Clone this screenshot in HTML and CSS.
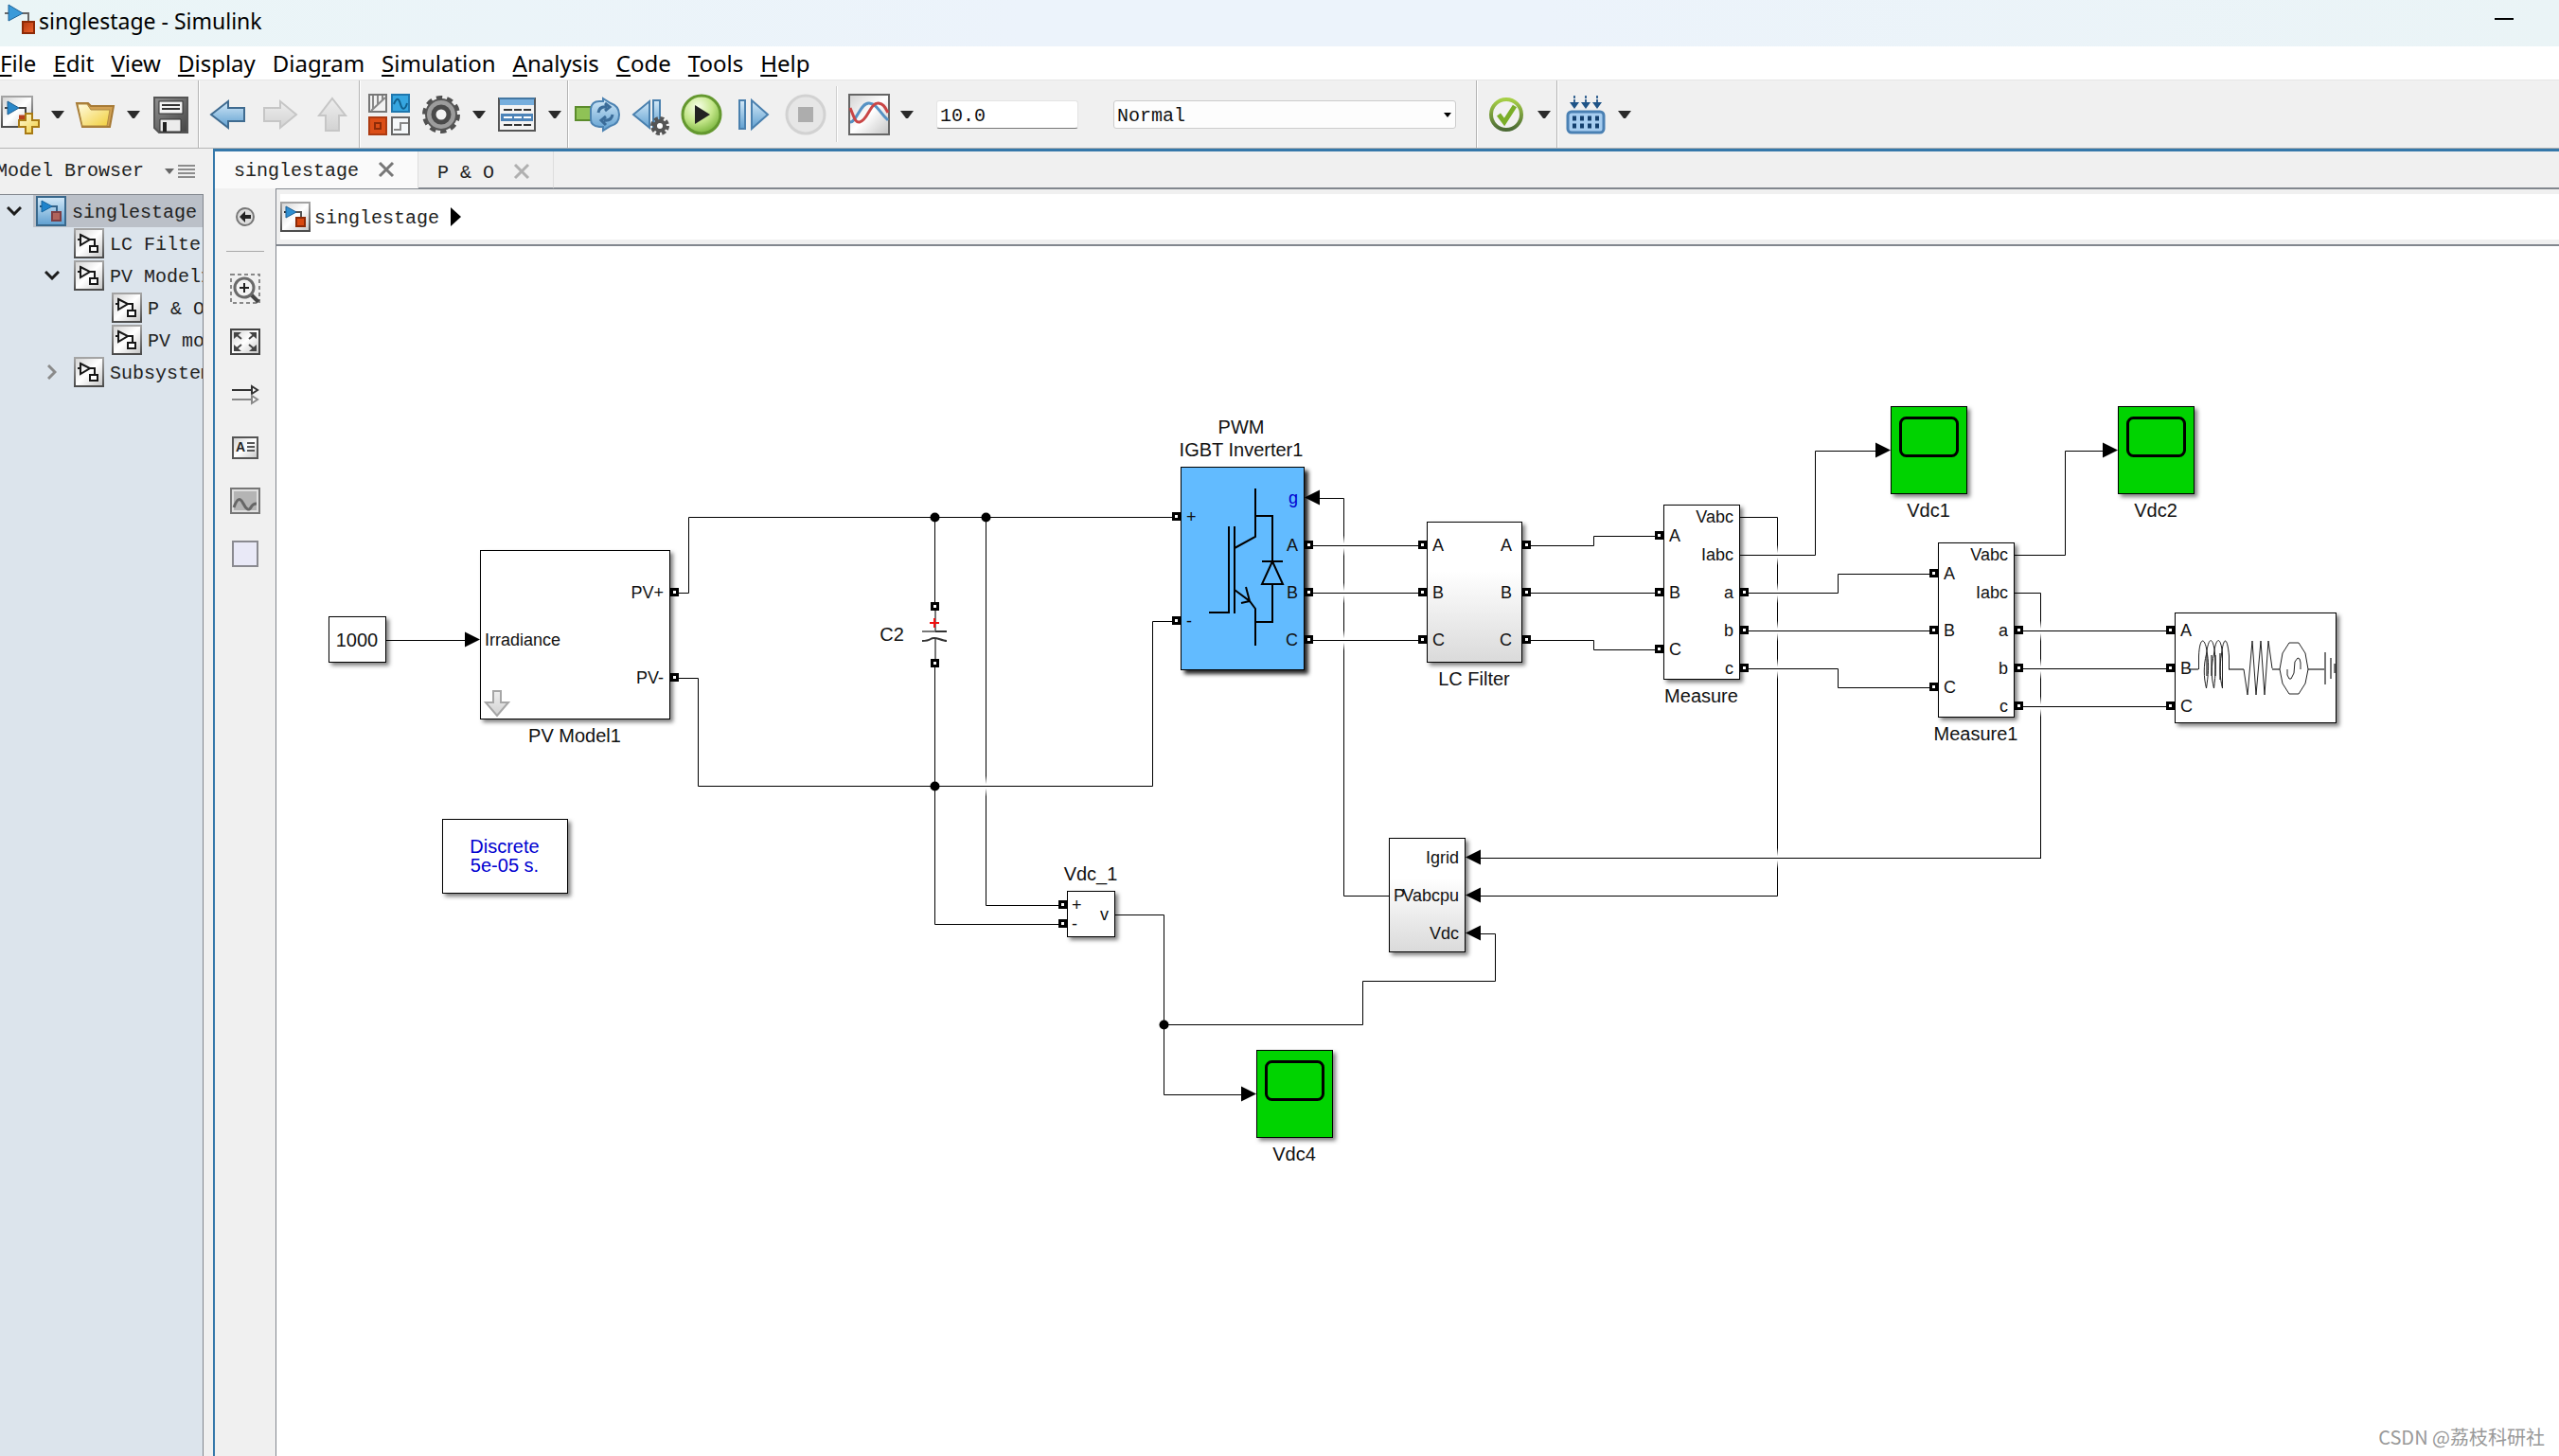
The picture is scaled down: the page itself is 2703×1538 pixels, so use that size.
FILE: index.html
```html
<!DOCTYPE html>
<html lang="en">
<head>
<meta charset="utf-8">
<title>singlestage - Simulink</title>
<link rel="stylesheet" href="styles.css">
</head>
<body>
<svg class="defs" aria-hidden="true">
  <defs>
    <linearGradient id="steel" x1="0" y1="0" x2="1" y2="1"><stop offset="0" stop-color="#d2d2d2"/><stop offset=".5" stop-color="#fff"/><stop offset="1" stop-color="#c4c4c4"/></linearGradient>
    <linearGradient id="frame" x1="0" y1="0" x2="0" y2="1"><stop offset="0" stop-color="#a4a4a4"/><stop offset="1" stop-color="#4c4c4c"/></linearGradient>
    <linearGradient id="sky" x1="0" y1="0" x2="0" y2="1"><stop offset="0" stop-color="#d3e9f8"/><stop offset="1" stop-color="#5f9fd0"/></linearGradient>
    <linearGradient id="mute" x1="0" y1="0" x2="0" y2="1"><stop offset="0" stop-color="#eee"/><stop offset="1" stop-color="#d2d2d2"/></linearGradient>
    <linearGradient id="gold" x1="0" y1="0" x2="1" y2="1"><stop offset="0" stop-color="#fffbe0"/><stop offset="1" stop-color="#f2cf3c"/></linearGradient>
    <linearGradient id="brick" x1="0" y1="0" x2="1" y2="1"><stop offset="0" stop-color="#b0380f"/><stop offset="1" stop-color="#f0642c"/></linearGradient>
    <linearGradient id="dark" x1="0" y1="0" x2="1" y2="1"><stop offset="0" stop-color="#909090"/><stop offset="1" stop-color="#444"/></linearGradient>
    <radialGradient id="lime" cx=".4" cy=".3" r=".8"><stop offset="0" stop-color="#f8ffe8"/><stop offset=".5" stop-color="#c3e689"/><stop offset="1" stop-color="#68a92a"/></radialGradient>
    <linearGradient id="moss" x1="0" y1="0" x2="0" y2="1"><stop offset="0" stop-color="#a6cf45"/><stop offset="1" stop-color="#4b6a35"/></linearGradient>
    <linearGradient id="subsys" x1="0" y1="0" x2="0" y2="1"><stop offset=".35" stop-color="#fff"/><stop offset="1" stop-color="#dadada"/></linearGradient>
    <linearGradient id="fade" x1="0" y1="0" x2="0" y2="1"><stop offset="0" stop-color="#fff" stop-opacity="0"/><stop offset=".4" stop-color="#fff"/><stop offset=".6" stop-color="#fff"/><stop offset="1" stop-color="#fff" stop-opacity="0"/></linearGradient>

    <symbol id="i-model" viewBox="0 0 32 32">
      <rect x="1" y="1" width="30" height="30" fill="url(#steel)" stroke="url(#frame)" stroke-width="2"/>
      <path d="M16 11h6v6" fill="none" stroke="#555" stroke-width="2"/>
      <path d="M4 11h2" stroke="#333" stroke-width="2"/>
      <path d="M6 5l11 6-11 6z" fill="#2f8fd0" stroke="#1b5f95"/>
      <rect x="17" y="17" width="9" height="9" fill="#d9480f" stroke="#8d2a06" stroke-width="2"/>
    </symbol>
    <symbol id="i-model-selected" viewBox="0 0 32 32">
      <rect x="1" y="1" width="30" height="30" fill="url(#sky)" stroke="#39688c" stroke-width="2"/>
      <path d="M16 11h6v6" fill="none" stroke="#34648c" stroke-width="2"/>
      <path d="M4 11h2" stroke="#1c4f78" stroke-width="2"/>
      <path d="M6 5l11 6-11 6z" fill="#1e83cc" stroke="#14639c"/>
      <rect x="17" y="17" width="9" height="9" fill="#b0645c" stroke="#7d3f45" stroke-width="2"/>
    </symbol>
    <symbol id="i-subsystem" viewBox="0 0 32 32">
      <rect x="1" y="1" width="30" height="30" fill="url(#steel)" stroke="url(#frame)" stroke-width="2"/>
      <path d="M4 12h3M7 7l10 5-10 6zM17 12h5v7" fill="none" stroke="#161616" stroke-width="2"/>
      <rect x="17" y="19" width="8" height="6" fill="#fff" stroke="#161616" stroke-width="2"/>
    </symbol>
    <symbol id="i-down" viewBox="0 0 14 8"><path d="M0 0h14L8 8H6z" fill="#2a2a2a"/></symbol>
    <symbol id="i-chevron-down" viewBox="0 0 16 10"><path d="M1 1l7 7 7-7" fill="none" stroke="#1c1c1c" stroke-width="3"/></symbol>
    <symbol id="i-chevron-right" viewBox="0 0 10 16"><path d="M1 1l7 7-7 7" fill="none" stroke="#8a8a8a" stroke-width="3"/></symbol>
    <symbol id="i-close" viewBox="0 0 18 18"><path d="M2 2l14 14M16 2L2 16" stroke="currentColor" stroke-width="3"/></symbol>
  </defs>
</svg>

<header class="titlebar">
  <svg class="app-logo" viewBox="0 0 34 34" aria-hidden="true">
    <path d="M0 10h4M18 10h7v9" fill="none" stroke="#666" stroke-width="2"/>
    <path d="M4 1l15 9-15 8z" fill="#3a9ad9" stroke="#1d6398"/>
    <rect x="19" y="19" width="12" height="12" fill="url(#brick)" stroke="#8d2a06" stroke-width="2"/>
  </svg>
  <h1>singlestage - Simulink</h1>
  <button class="minimize" aria-label="Minimize"></button>
</header>

<nav class="menubar" aria-label="Main menu">
  <button><u>F</u>ile</button><button><u>E</u>dit</button><button><u>V</u>iew</button><button><u>D</u>isplay</button><button>Diag<u>r</u>am</button><button><u>S</u>imulation</button><button><u>A</u>nalysis</button><button><u>C</u>ode</button><button><u>T</u>ools</button><button><u>H</u>elp</button>
</nav>

<div class="toolbar" role="toolbar">
  <div class="group first">
    <button class="tool" aria-label="New model"><svg viewBox="0 0 44 44"><rect x="3" y="3" width="32" height="32" fill="url(#steel)" stroke="url(#frame)" stroke-width="2"/><path d="M6 15h4M21 15h7v7M21 24h8" fill="none" stroke="#444" stroke-width="2"/><path d="M21 25h9" stroke="#b8401c" stroke-width="5"/><path d="M9 8l12 7-12 7z" fill="#2a88c9" stroke="#1b5c90"/><path d="M28 21h7v7h7v7h-7v7h-7v-7h-7v-7h7z" fill="url(#gold)" stroke="#a87a14" stroke-width="2"/></svg></button>
    <button class="more" aria-label="New options"><svg><use href="#i-down"/></svg></button>
    <button class="tool" aria-label="Open"><svg viewBox="0 0 44 44"><path d="M2 10h12l3 3h24l-4 22H8z" fill="#d2a153" stroke="#a77a35" stroke-width="2"/><path d="M3 11h10l4 6h20l-3 17H8z" fill="url(#gold)" stroke="#b08a43"/></svg></button>
    <button class="more" aria-label="Open options"><svg><use href="#i-down"/></svg></button>
    <button class="tool" aria-label="Save"><svg viewBox="0 0 44 44"><path d="M4 4h35v37H9l-5-5z" fill="url(#dark)" stroke="#555" stroke-width="2"/><rect x="9" y="8" width="25" height="13" fill="#f3f3f3" stroke="#333"/><path d="M12 12h19M12 16h19" stroke="#333" stroke-width="2"/><path d="M10 27h22v13H10z" fill="#ececec" stroke="#333"/><path d="M15 30v10" stroke="#222" stroke-width="4"/></svg></button>
  </div>
  <span class="divider"></span>
  <div class="group">
    <button class="tool" aria-label="Back"><svg viewBox="0 0 44 44"><path d="M4 22L22 8v7h17v14H22v7z" fill="url(#sky)" stroke="#3f6b90" stroke-width="2"/></svg></button>
    <button class="tool" aria-label="Forward" disabled><svg viewBox="0 0 44 44"><path d="M39 22L22 8v7H5v14h17v7z" fill="url(#mute)" stroke="#c6c6c6" stroke-width="2"/></svg></button>
    <button class="tool" aria-label="Up to parent" disabled><svg viewBox="0 0 44 44"><path d="M22 5l14 18h-7v16H15V23H8z" fill="url(#mute)" stroke="#c6c6c6" stroke-width="2"/></svg></button>
  </div>
  <span class="divider"></span>
  <div class="group">
    <button class="tool" aria-label="Library browser"><svg viewBox="0 0 44 44"><rect x="1" y="1" width="18" height="18" fill="#f2f2f2" stroke="#777" stroke-width="2"/><path d="M5 2v14M10 2v10M15 2v5M3 18L18 4" stroke="#888" stroke-width="2"/><rect x="25" y="1" width="18" height="18" fill="#36a6e0" stroke="#1f77ae" stroke-width="2"/><path d="M27 11c3-7 5-7 7 0s5 6 7-1" fill="none" stroke="#10618f" stroke-width="2"/><rect x="1" y="25" width="18" height="18" fill="#dc4e17" stroke="#ad3b12" stroke-width="2"/><rect x="7" y="31" width="6" height="6" fill="none" stroke="#8d2b08" stroke-width="2"/><rect x="25" y="25" width="18" height="18" fill="#f5f8fa" stroke="#666" stroke-width="2"/><path d="M27 38h7v-7h8" fill="none" stroke="#888" stroke-width="2"/></svg></button>
    <button class="tool" aria-label="Model configuration"><svg viewBox="0 0 44 44"><circle cx="22" cy="22" r="17" fill="none" stroke="#505050" stroke-width="6" stroke-dasharray="6 4.68"/><circle cx="22" cy="22" r="16" fill="#9c9c9c" stroke="#555" stroke-width="2"/><circle cx="22" cy="22" r="8" fill="#f4f4f4" stroke="#4a4a4a" stroke-width="5"/></svg></button>
    <button class="more" aria-label="Configuration options"><svg><use href="#i-down"/></svg></button>
    <button class="tool" aria-label="Model explorer"><svg viewBox="0 0 44 44"><rect x="3" y="5" width="38" height="34" fill="#f3f3f3" stroke="#555" stroke-width="2"/><rect x="4" y="5" width="36" height="7" fill="#76aedd"/><path d="M3 5h38" stroke="#4477a2" stroke-width="2"/><path d="M8 17h9M19 17h8M29 17h8M8 33h9M19 33h8M29 33h8" stroke="#333" stroke-width="2"/><rect x="5" y="21" width="34" height="8" fill="#4c83b8"/><path d="M8 25h9M19 25h8M29 25h8" stroke="#fff" stroke-width="2"/></svg></button>
    <button class="more" aria-label="Explorer options"><svg><use href="#i-down"/></svg></button>
  </div>
  <span class="divider"></span>
  <div class="group">
    <button class="tool" aria-label="Fast restart"><svg class="wide" viewBox="0 0 50 44"><rect x="2" y="14" width="20" height="14" fill="#8fc256" stroke="#5c8c2c" stroke-width="2"/><path d="M18 16q1-8 9-8h4V5l8 5q9 3 9 12 0 10-9 12l-8 5v-4h-4q-9-1-9-8z" fill="url(#sky)" stroke="#4d83b2" stroke-width="2"/><path d="M26 20q1-7 9-6M33 10l5 4-5 4M41 22q-1 7-9 6M34 33l-5-5 5-4" fill="none" stroke="#3b6c99" stroke-width="3"/></svg></button>
    <button class="tool" aria-label="Step back"><svg viewBox="0 0 44 44"><path d="M5 22L22 8v28zM26 7h7v30h-7z" fill="url(#sky)" stroke="#4a80ae" stroke-width="2"/><circle cx="33" cy="34" r="8" fill="none" stroke="#555" stroke-width="4" stroke-dasharray="4 2.28"/><circle cx="33" cy="34" r="5" fill="#fff" stroke="#555" stroke-width="4"/></svg></button>
    <button class="tool" aria-label="Run"><svg viewBox="0 0 44 44"><circle cx="22" cy="22" r="20" fill="url(#lime)" stroke="#64982f" stroke-width="3"/><path d="M15 12l16 10-16 10z" fill="#222"/></svg></button>
    <button class="tool" aria-label="Step forward"><svg viewBox="0 0 44 44"><path d="M7 7h6v30H7zM20 7l17 15-17 15z" fill="url(#sky)" stroke="#4a80ae" stroke-width="2"/></svg></button>
    <button class="tool" aria-label="Stop" disabled><svg viewBox="0 0 44 44"><circle cx="22" cy="22" r="20" fill="#e6e6e6" stroke="#d2d2d2" stroke-width="3"/><path d="M14 14h16v16H14z" fill="#adadad"/></svg></button>
  </div>
  <span class="divider short"></span>
  <div class="group">
    <button class="tool" aria-label="Data inspector"><svg viewBox="0 0 44 44"><rect x="1" y="1" width="42" height="42" fill="url(#steel)" stroke="#666" stroke-width="2"/><path d="M2 30C9 30 13 9 22 10s11 10 20 18" fill="none" stroke="#5692c4" stroke-width="3"/><path d="M2 15c4 9 5 16 10 15C21 28 23 9 32 10c6 1 7 5 10 10" fill="none" stroke="#c94646" stroke-width="3"/></svg></button>
    <button class="more" aria-label="Inspector options"><svg><use href="#i-down"/></svg></button>
  </div>
  <input class="stop-time" type="text" value="10.0" aria-label="Simulation stop time">
  <div class="mode">
    <select aria-label="Simulation mode"><option>Normal</option><option>Accelerator</option></select>
    <svg class="mode-caret" viewBox="0 0 8 5" aria-hidden="true"><path d="M0 0h8L4 5z"/></svg>
  </div>
  <span class="divider spaced"></span>
  <div class="group">
    <button class="tool" aria-label="Model advisor"><svg viewBox="0 0 44 44"><circle cx="22" cy="22" r="16" fill="#f1f1f1" stroke="url(#moss)" stroke-width="4"/><path d="M14 22l6 8L31 13" fill="none" stroke="#7aae28" stroke-width="5"/></svg></button>
    <button class="more" aria-label="Advisor options"><svg><use href="#i-down"/></svg></button>
  </div>
  <span class="divider"></span>
  <div class="group">
    <button class="tool" aria-label="Build model"><svg viewBox="0 0 44 44"><path d="M9 2v8M21 2v8M33 2v8" stroke="#3a6693" stroke-width="2" stroke-dasharray="3 1"/><path d="M4 9h10l-5 7zM16 9h10l-5 7zM28 9h10l-5 7z" fill="#1f5487"/><rect x="2" y="19" width="38" height="22" rx="4" fill="#a6cdf0" stroke="#4a80b3" stroke-width="3"/><path d="M7 26h28M7 34h28" stroke="#14406e" stroke-width="5" stroke-dasharray="4 4"/></svg></button>
    <button class="more" aria-label="Build options"><svg><use href="#i-down"/></svg></button>
  </div>
</div>

<div class="workspace">
  <aside class="browser">
    <div class="browser-head">
      <h2>Model Browser</h2>
      <button aria-label="Browser options"><svg viewBox="0 0 32 16"><path d="M0 5h10l-5 6z" fill="#666"/><path d="M14 2h18M14 6h18M14 10h18M14 14h18" stroke="#8c8c8c" stroke-width="2"/></svg></button>
    </div>
    <ul class="tree">
      <li class="node">
        <button class="twisty" aria-label="Collapse"><svg class="chev-down"><use href="#i-chevron-down"/></svg></button>
        <span class="item selected"><svg><use href="#i-model-selected"/></svg><span>singlestage</span></span>
      </li>
      <li class="node level-1"><span class="twisty"></span><span class="item"><svg><use href="#i-subsystem"/></svg><span>LC Filter</span></span></li>
      <li class="node level-1">
        <button class="twisty" aria-label="Collapse"><svg class="chev-down"><use href="#i-chevron-down"/></svg></button>
        <span class="item"><svg><use href="#i-subsystem"/></svg><span>PV Model1</span></span>
      </li>
      <li class="node level-2"><span class="twisty"></span><span class="item"><svg><use href="#i-subsystem"/></svg><span>P &amp; O</span></span></li>
      <li class="node level-2"><span class="twisty"></span><span class="item"><svg><use href="#i-subsystem"/></svg><span>PV model</span></span></li>
      <li class="node level-1">
        <button class="twisty" aria-label="Expand"><svg class="chev-right"><use href="#i-chevron-right"/></svg></button>
        <span class="item"><svg><use href="#i-subsystem"/></svg><span>Subsystem</span></span>
      </li>
    </ul>
  </aside>

  <main class="editor">
    <div class="tabs">
      <div class="tab active"><span>singlestage</span><button aria-label="Close singlestage"><svg><use href="#i-close"/></svg></button></div>
      <div class="tab"><span>P &amp; O</span><button aria-label="Close P &amp; O"><svg><use href="#i-close"/></svg></button></div>
      <div class="tab-rest"></div>
    </div>
    <div class="editor-body">
      <div class="palette">
        <button class="hide" aria-label="Hide browser"><svg viewBox="0 0 32 32"><circle cx="16" cy="16" r="9" fill="#ddd" stroke="#777" stroke-width="2"/><path d="M10 16l6-6v4h6v4h-6v4z" fill="#222"/></svg></button>
        <hr>
        <button aria-label="Zoom"><svg viewBox="0 0 32 32"><path d="M1 1h30v30H1z" fill="none" stroke="#888" stroke-width="2" stroke-dasharray="4 3"/><path d="M21 21l9 9" stroke="#444" stroke-width="4"/><circle cx="15" cy="15" r="10" fill="#f4f4f4" stroke="#6a6a6a" stroke-width="3"/><path d="M10 15h10M15 10v10" stroke="#222" stroke-width="2"/></svg></button>
        <button aria-label="Fit to view"><svg viewBox="0 0 32 32"><rect x="1" y="3" width="30" height="26" fill="url(#steel)" stroke="#444" stroke-width="2"/><path d="M4 6h8l-8 7zM28 6h-8l8 7zM4 26h8l-8-7zM28 26h-8l8-7z" fill="#444"/><path d="M6 8l6 5M26 8l-6 5M6 24l6-5M26 24l-6-5" stroke="#444" stroke-width="2"/></svg></button>
        <button aria-label="Signal style"><svg viewBox="0 0 32 32"><path d="M2 11h20" stroke="#333" stroke-width="2"/><path d="M23 7v8l6-4z" fill="#fff" stroke="#333" stroke-width="2"/><path d="M2 21h20" stroke="#888" stroke-width="2"/><path d="M23 17v8l6-4z" fill="#fff" stroke="#888" stroke-width="2"/></svg></button>
        <button aria-label="Annotation"><svg viewBox="0 0 32 32"><rect x="3" y="5" width="26" height="22" fill="url(#steel)" stroke="#555" stroke-width="2"/><path d="M18 11h8M18 15h8M18 19h8" stroke="#555" stroke-width="2"/><text class="glyph" x="6" y="20">A</text></svg></button>
        <button aria-label="Image"><svg viewBox="0 0 32 32"><rect x="1" y="3" width="30" height="26" fill="#e0e0e0" stroke="#777" stroke-width="2"/><rect x="4" y="6" width="24" height="20" fill="#b4b4b4"/><path d="M4 23c4-11 7-10 10-4s6 8 8 4 4-4 6-4" fill="none" stroke="#666" stroke-width="3"/></svg></button>
        <button aria-label="Area"><svg viewBox="0 0 32 32"><rect x="3" y="3" width="26" height="26" fill="#e9e9f7" stroke="#8a8a90" stroke-width="2"/></svg></button>
      </div>
      <section class="sheet">
        <div class="breadcrumb"><div class="crumbs"><svg class="crumb-icon"><use href="#i-model"/></svg><a href="#">singlestage</a><svg class="crumb-caret" viewBox="0 0 11 20"><path d="M0 0l11 10L0 20z"/></svg></div></div>
        <div class="canvas">
          <svg class="diagram" role="img" aria-label="Single stage photovoltaic inverter model">
            <defs>
              <g id="port"><path d="M-4 -5h9v9h-9z"/><path d="M-1 -2h3v3h-3z" fill="#fff"/></g>
              <path id="in-r" d="M0 0l-16 -8v16z"/>
              <path id="in-l" d="M0 0l16 -8v16z"/>
              <rect id="gap" x="-2" y="-11" width="4" height="22" fill="url(#fade)"/>
              <g id="scope"><rect class="block" width="80" height="92" fill="#00d300"/><rect class="thick" x="10" y="12" width="60" height="40" rx="6"/></g>
            </defs>
            <g transform="translate(-292 -260)">
              <!-- vertical wires that other wires cross -->
              <path class="wire" d="M1041.500 546.500V956.500H1118M1393 526.500H1419.500V946.500H1467M1838 546.500H1877.500V946.500H1563M2128 626.500H2155.500V906.500"/>
              <use href="#gap" x="1041.500" y="830.500"/>
              <use href="#gap" x="1419.500" y="576.500"/><use href="#gap" x="1419.500" y="626.500"/><use href="#gap" x="1419.500" y="676.500"/>
              <use href="#gap" x="1877.500" y="586.500"/><use href="#gap" x="1877.500" y="626.500"/><use href="#gap" x="1877.500" y="666.500"/><use href="#gap" x="1877.500" y="706.500"/><use href="#gap" x="1877.500" y="906.500"/>
              <use href="#gap" x="2155.500" y="666.500"/><use href="#gap" x="2155.500" y="706.500"/><use href="#gap" x="2155.500" y="746.500"/>
              <!-- remaining wires -->
              <path class="wire" d="M408 676.500H492M717 626.500H727.500V546.500H1238M717 716.500H737.500V830.500H1217.500V656.500H1238M987.500 546V636M987.500 705V976.500H1118"/>
              <path class="wire" d="M1387 576.500H1498M1387 626.500H1498M1387 676.500H1498M1617 576.500H1683.500V566.500H1748M1617 626.500H1748M1617 676.500H1683.500V686.500H1748"/>
              <path class="wire" d="M1838 586.500H1917.500V476.500H1982M1847 626.500H1941.500V606.500H2038M1847 666.500H2038M1847 706.500H1941.500V726.500H2038"/>
              <path class="wire" d="M2128 586.500H2181.500V476.500H2222M2137 666.500H2288M2137 706.500H2288M2137 746.500H2288M2156 906.500H1563"/>
              <path class="wire" d="M1178 966.500H1229.500V1156.500H1312M1229.500 1082.500H1439.500V1036.500H1579.500V986.500H1563"/>
              <circle cx="987.500" cy="546.500" r="5"/><circle cx="1041.500" cy="546.500" r="5"/><circle cx="987.500" cy="830.500" r="5"/><circle cx="1229.500" cy="1082.500" r="5"/>

              <!-- constant -->
              <rect class="block" x="347.500" y="651.500" width="60" height="48"/>
              <text class="name mid" x="377" y="683">1000</text>

              <!-- PV model -->
              <rect class="block" x="507.500" y="581.500" width="200" height="178"/>
              <path d="M521 730h8v12h8l-12 14-12-14h8z" fill="url(#mute)" stroke="#a6a6a6" stroke-width="2"/>
              <text x="512" y="682">Irradiance</text>
              <text class="end" x="701" y="632">PV+</text><text class="end" x="701" y="722">PV-</text>
              <text class="name mid" x="607" y="784">PV Model1</text>
              <use href="#in-r" x="507" y="675.500"/>
              <use href="#port" x="712" y="626"/><use href="#port" x="712" y="716"/>

              <!-- powergui -->
              <rect class="block" x="467.500" y="865.500" width="132" height="78"/>
              <text class="name mid blue" x="533" y="901">Discrete</text><text class="name mid blue" x="533" y="921">5e-05 s.</text>

              <!-- capacitor -->
              <g fill="none" stroke="#777" stroke-width="2"><path d="M988 645v22M988 675v21M974 667h14"/><path stroke="#333" d="M988 667h12M974 677q6 0 9-2t9 0 8 2"/><path stroke="#f01010" d="M982 658h10M987 653v10"/></g>
              <use href="#port" x="987" y="641"/><use href="#port" x="987" y="701"/>
              <text class="name mid" x="942" y="677">C2</text>

              <!-- inverter -->
              <text class="name mid" x="1311" y="458">PWM</text><text class="name mid" x="1311" y="482">IGBT Inverter1</text>
              <rect class="block raised" x="1247.500" y="493.500" width="130" height="214" fill="#62bbff"/>
              <path class="symbol" d="M1326 516v51l-22 12M1298 556v91h-21M1304 556v92M1304 623l16 12 6 8v39M1316 620l4 15-9 2M1326 545h18v48M1344 617v40h-18M1333 593h22M1344 593l-11 24h22z"/>
              <text x="1253" y="552">+</text><text x="1253" y="662">-</text>
              <text class="end blue" x="1371" y="532">g</text><text class="end" x="1371" y="582">A</text><text class="end" x="1371" y="632">B</text><text class="end" x="1371" y="682">C</text>
              <use href="#in-l" x="1378" y="525.500"/>
              <use href="#port" x="1242" y="546"/><use href="#port" x="1242" y="656"/>
              <use href="#port" x="1382" y="576"/><use href="#port" x="1382" y="626"/><use href="#port" x="1382" y="676"/>

              <!-- LC filter -->
              <rect class="block" x="1507.500" y="551.500" width="100" height="148" fill="url(#subsys)"/>
              <text x="1513" y="582">A</text><text x="1513" y="632">B</text><text x="1513" y="682">C</text>
              <text class="end" x="1597" y="582">A</text><text class="end" x="1597" y="632">B</text><text class="end" x="1597" y="682">C</text>
              <text class="name mid" x="1557" y="724">LC Filter</text>
              <use href="#port" x="1502" y="576"/><use href="#port" x="1502" y="626"/><use href="#port" x="1502" y="676"/>
              <use href="#port" x="1612" y="576"/><use href="#port" x="1612" y="626"/><use href="#port" x="1612" y="676"/>

              <!-- measurement blocks -->
              <rect class="block" x="1757.500" y="533.500" width="80" height="184"/>
              <text x="1763" y="572">A</text><text x="1763" y="632">B</text><text x="1763" y="692">C</text>
              <text class="end" x="1831" y="552">Vabc</text><text class="end" x="1831" y="592">Iabc</text><text class="end" x="1831" y="632">a</text><text class="end" x="1831" y="672">b</text><text class="end" x="1831" y="712">c</text>
              <text class="name mid" x="1797" y="742">Measure</text>
              <use href="#port" x="1752" y="566"/><use href="#port" x="1752" y="626"/><use href="#port" x="1752" y="686"/>
              <use href="#port" x="1842" y="626"/><use href="#port" x="1842" y="666"/><use href="#port" x="1842" y="706"/>

              <rect class="block" x="2047.500" y="573.500" width="80" height="184"/>
              <text x="2053" y="612">A</text><text x="2053" y="672">B</text><text x="2053" y="732">C</text>
              <text class="end" x="2121" y="592">Vabc</text><text class="end" x="2121" y="632">Iabc</text><text class="end" x="2121" y="672">a</text><text class="end" x="2121" y="712">b</text><text class="end" x="2121" y="752">c</text>
              <text class="name mid" x="2087" y="782">Measure1</text>
              <use href="#port" x="2042" y="606"/><use href="#port" x="2042" y="666"/><use href="#port" x="2042" y="726"/>
              <use href="#port" x="2132" y="666"/><use href="#port" x="2132" y="706"/><use href="#port" x="2132" y="746"/>

              <!-- scopes -->
              <use href="#scope" x="1997.500" y="429.500"/><use href="#in-r" x="1997" y="475.500"/><text class="name mid" x="2037" y="546">Vdc1</text>
              <use href="#scope" x="2237.500" y="429.500"/><use href="#in-r" x="2237" y="475.500"/><text class="name mid" x="2277" y="546">Vdc2</text>
              <use href="#scope" x="1327.500" y="1109.500"/><use href="#in-r" x="1327" y="1155.500"/><text class="name mid" x="1367" y="1226">Vdc4</text>

              <!-- three-phase source -->
              <rect class="block" x="2297.500" y="647.500" width="170" height="116"/>
              <g fill="none" stroke="#222" stroke-width="1"><path stroke="#777" stroke-width="2" d="M2312 707h10M2354 707h16M2400 707h8M2438 707h18M2456 689v34M2462 695v22M2466 701v10M2331 692v22M2336 692v22M2340 692v22M2345 690v28"/><path d="M2322.500 707V693c1-22 7-20 9-2 2 12 1 22-1 36-3-12-3-24 0-36 2-18 7-20 9-1 1 12 1 22-1 37-3-12-3-24 0-36 2-18 7-20 9-1v37c-3-12-3-24-1-36 2-18 6-20 8 2v14"/><path d="M2370 707l4 27 5-57 4 57 5-57 4 57 4-57 4 29M2408 707l3-17 7-11h10l7 11 3 17-3 15-7 11h-10l-7-11zM2416 707v6l2 4h2l3-6 1-12 3-4 2 1 1 4v7"/></g>
              <text x="2303" y="672">A</text><text x="2303" y="712">B</text><text x="2303" y="752">C</text>
              <use href="#port" x="2292" y="666"/><use href="#port" x="2292" y="706"/><use href="#port" x="2292" y="746"/>

              <!-- voltage measurement -->
              <rect class="block" x="1127.500" y="941.500" width="50" height="48"/>
              <text x="1132" y="962">+</text><text x="1132" y="982">-</text><text class="end" x="1171" y="972">v</text>
              <text class="name mid" x="1152" y="930">Vdc_1</text>
              <use href="#port" x="1122" y="956"/><use href="#port" x="1122" y="976"/>

              <!-- controller -->
              <rect class="block" x="1467.500" y="885.500" width="80" height="120" fill="url(#subsys)"/>
              <text class="end" x="1541" y="912">Igrid</text><text y="952"><tspan x="1472">P</tspan><tspan class="end" x="1541">Vabcpu</tspan></text><text class="end" x="1541" y="992">Vdc</text>
              <use href="#in-l" x="1548" y="905.500"/><use href="#in-l" x="1548" y="945.500"/><use href="#in-l" x="1548" y="985.500"/>
            </g>
          </svg>
          <p class="credit">CSDN @荔枝科研社</p>
        </div>
      </section>
    </div>
  </main>
</div>
</body>
</html>
```

FILE: styles.css
```css
* { box-sizing: border-box; }

body {
  margin: 0;
  height: 100vh;
  display: flex;
  flex-direction: column;
  overflow: hidden;
  background: #f0f0f0;
  color: #000;
  font-family: "Noto Sans", sans-serif;
}

button {
  margin: 0;
  padding: 0;
  border: 0;
  background: none;
  color: inherit;
  font: inherit;
}

svg { display: block; flex: none; }
.defs { position: absolute; width: 0; height: 0; }

/* Title bar */
.titlebar {
  display: flex;
  flex: none;
  height: 49px;
  padding: 4px 48px 0 5px;
  background: linear-gradient(90deg, #eaf5f6, #ecf3fb 40%, #ecf3fb 60%, #eaf4f6);
}
.app-logo { width: 34px; height: 34px; }
.titlebar h1 {
  flex: 1;
  margin: 0 0 0 2px;
  font-size: 23px;
  font-weight: 400;
  line-height: 36px;
}
.minimize { width: 20px; height: 17px; border-bottom: 2px solid #000; }

/* Menu bar */
.menubar {
  display: flex;
  flex: none;
  gap: 18px;
  height: 36px;
  background: #fff;
  border-bottom: 1px solid #e6e6e6;
  font-size: 24px;
  line-height: 36px;
}
.menubar u { text-decoration-thickness: 2px; text-underline-offset: 3px; }

/* Toolbar */
.toolbar {
  display: flex;
  flex: none;
  align-items: center;
  height: 72px;
  border-bottom: 1px solid #b4b4b4;
}
.group { display: flex; }
.group.first { margin-left: -7px; }
.tool { display: grid; place-items: center; width: 55px; height: 48px; }
.tool svg { width: 44px; height: 44px; }
.tool .wide { width: 50px; }
.more { display: grid; place-items: center; width: 25px; height: 48px; }
.more svg { width: 14px; height: 8px; }
.divider {
  align-self: stretch;
  width: 1px;
  margin: 0 3px 0 1px;
  background: #b4b4b4;
  box-shadow: 1px 0 #fff;
}
.divider.short { margin: 6px 6px 6px 5px; background: #cfcfcf; }
.divider.spaced { margin-left: 21px; }

.stop-time, .mode select {
  height: 30px;
  padding: 4px 3px 0;
  background: #fff;
  border: 1px solid #e4e4e4;
  border-bottom-color: #777;
  border-radius: 3px;
  color: #111;
  font: 20px/24px "Liberation Mono", monospace;
}
.stop-time { width: 150px; margin-left: 19px; }
.mode { position: relative; width: 362px; margin-left: 37px; }
.mode select {
  display: block;
  width: 100%;
  appearance: none;
  background: #fdfdfd;
  border-color: #ccc;
}
.mode-caret { position: absolute; right: 5px; top: 13px; width: 8px; height: 5px; }

/* Workspace */
.workspace {
  display: flex;
  flex: 1;
  gap: 10px;
  min-height: 0;
  font: 20px/34px "Liberation Mono", monospace;
  color: #222;
}

.browser { display: flex; flex: none; flex-direction: column; width: 215px; }
.browser-head { display: flex; align-items: center; height: 48px; padding-right: 9px; }
.browser-head h2 { flex: 1; margin: 0 0 0 -4px; font-size: 20px; font-weight: 400; }
.browser-head svg { width: 32px; height: 16px; }

.tree {
  flex: 1;
  margin: 0;
  padding: 0;
  overflow: hidden;
  list-style: none;
  background: #dce4ec;
  border: solid #82878e;
  border-width: 1px 1px 0 0;
}
.node { display: flex; height: 34px; }
.level-1 { padding-left: 40px; }
.level-2 { padding-left: 80px; }
.twisty { display: grid; flex: none; place-items: center; width: 30px; }
.chev-down { width: 16px; height: 10px; }
.chev-right { width: 10px; height: 16px; }
.item {
  display: flex;
  flex: 1;
  gap: 6px;
  align-items: center;
  margin-left: 5px;
  padding-left: 3px;
  white-space: nowrap;
}
.item span { padding-top: 4px; }
.item svg { width: 32px; height: 32px; }
.item.selected { background: #bbc0c8; }

/* Editor */
.editor {
  display: flex;
  flex: 1;
  flex-direction: column;
  min-width: 0;
  border: solid #3578aa;
  border-width: 3px 0 0 2px;
}
.tabs { display: flex; flex: none; height: 39px; }
.tab {
  display: flex;
  gap: 20px;
  align-items: center;
  padding: 3px 24px 0 20px;
  border-right: 1px solid #ddd;
  border-bottom: 1px solid #82878e;
  color: #222;
}
.tab span { padding-top: 4px; }
.tab button { color: #b0b0b0; }
.tab svg { width: 18px; height: 18px; }
.tab.active { padding-top: 0; background: #fafafa; border-bottom-color: #fafafa; }
.tab.active button { color: #777; }
.tab-rest { flex: 1; border-bottom: 1px solid #82878e; }

.editor-body { display: flex; flex: 1; min-height: 0; }
.palette {
  display: flex;
  flex: none;
  flex-direction: column;
  gap: 24px;
  align-items: center;
  width: 64px;
  padding-top: 14px;
}
.palette svg { width: 32px; height: 32px; }
.palette hr {
  width: 40px;
  margin: -4px 0 -1px;
  border: 0;
  border-top: 1px solid #aaa;
}
.glyph { font: bold 14px "Liberation Sans", sans-serif; fill: #222; }

.sheet {
  display: flex;
  flex: 1;
  flex-direction: column;
  min-width: 0;
  border-left: 1px solid #82878e;
}
.breadcrumb {
  flex: none;
  padding: 5px 0 5px 4px;
  border: solid #82878e;
  border-width: 1px 0 2px;
}
.crumbs { display: flex; align-items: center; height: 48px; background: #fff; }
.crumb-icon { width: 32px; height: 32px; }
.crumb-caret { width: 11px; height: 20px; margin-left: 12px; }
.crumbs a { margin-left: 4px; padding-top: 4px; color: inherit; text-decoration: none; }

.canvas { position: relative; flex: 1; min-height: 0; background: #fff; }
.diagram { width: 100%; height: 100%; font: 18px "Liberation Sans", sans-serif; }
.diagram text { fill: #111; }
.diagram .name { font-size: 20px; }
.diagram .mid { text-anchor: middle; }
.diagram .end { text-anchor: end; }
.diagram .blue { fill: #0000d0; }
.wire { fill: none; stroke: #000; stroke-width: 1px; }
.block { stroke: #000; stroke-width: 1px; filter: drop-shadow(3px 3px 2px rgba(0, 0, 0, .5)); }
.block:not([fill]) { fill: #fff; }
.raised { filter: drop-shadow(4px 4px 2px rgba(0, 0, 0, .85)); }
.thick { fill: none; stroke: #000; stroke-width: 3px; }
.symbol { fill: none; stroke: #000; stroke-width: 2px; }

.credit {
  position: absolute;
  right: 15px;
  bottom: 5px;
  margin: 0;
  color: #999;
  font: 20px/30px "Noto Sans CJK SC", sans-serif;
}
```
